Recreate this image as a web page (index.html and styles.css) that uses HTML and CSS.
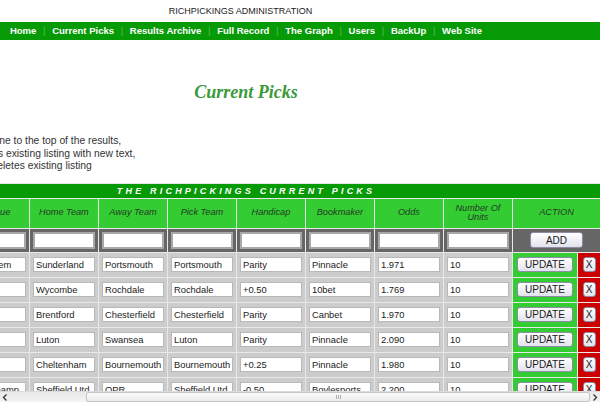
FILE: index.html
```html
<!DOCTYPE html>
<html>
<head>
<meta charset="utf-8">
<title>RichPickings Administration</title>
<link rel="stylesheet" href="styles.css">
</head>
<body>
<div class="viewport">
  <div class="page">
    <div class="site-title">RICHPICKINGS ADMINISTRATION</div>
    <nav class="menu">
      <a href="#">Home</a><span class="sep">|</span>
      <a href="#">Current Picks</a><span class="sep">|</span>
      <a href="#">Results Archive</a><span class="sep">|</span>
      <a href="#">Full Record</a><span class="sep">|</span>
      <a href="#">The Graph</a><span class="sep">|</span>
      <a href="#">Users</a><span class="sep">|</span>
      <a href="#">BackUp</a><span class="sep">|</span>
      <a href="#">Web Site</a>
    </nav>
    <h1 class="page-title">Current Picks</h1>
    <div class="notes">
      <p>ADD - Puts a new line to the top of the results,</p>
      <p>UPDATE - Replaces existing listing with new text,</p>
      <p>X - The 'X' button deletes existing listing</p>
    </div>
    <table class="picks">
      <colgroup>
        <col class="c"><col class="c"><col class="c"><col class="c"><col class="c"><col class="c"><col class="c"><col class="c"><col class="c"><col class="cu"><col class="cx">
      </colgroup>
      <tr class="bar"><th colspan="11">THE RICHPICKINGS CURRENT PICKS</th></tr>
      <tr class="heads">
        <th>Date</th><th>League</th><th>Home Team</th><th>Away Team</th><th>Pick Team</th><th>Handicap</th><th>Bookmaker</th><th>Odds</th><th>Number Of<br>Units</th><th colspan="2">ACTION</th>
      </tr>
      <tr class="addrow">
        <td><input type="text"></td><td><input type="text"></td><td><input type="text"></td><td><input type="text"></td><td><input type="text"></td><td><input type="text"></td><td><input type="text"></td><td><input type="text"></td><td><input type="text"></td>
        <td colspan="2"><button class="btn add">ADD</button></td>
      </tr>
      <tr class="row">
        <td><input value="21/02/09"></td><td><input value="Eng. Prem"></td><td><input value="Sunderland"></td><td><input value="Portsmouth"></td><td><input value="Portsmouth"></td><td><input value="Parity"></td><td><input value="Pinnacle"></td><td><input value="1.971"></td><td><input value="10"></td>
        <td class="upd"><button class="btn">UPDATE</button></td><td class="del"><button class="btn x">X</button></td>
      </tr>
      <tr class="row">
        <td><input value="21/02/09"></td><td><input value="Eng. L2"></td><td><input value="Wycombe"></td><td><input value="Rochdale"></td><td><input value="Rochdale"></td><td><input value="+0.50"></td><td><input value="10bet"></td><td><input value="1.769"></td><td><input value="10"></td>
        <td class="upd"><button class="btn">UPDATE</button></td><td class="del"><button class="btn x">X</button></td>
      </tr>
      <tr class="row">
        <td><input value="21/02/09"></td><td><input value="Eng. L2"></td><td><input value="Brentford"></td><td><input value="Chesterfield"></td><td><input value="Chesterfield"></td><td><input value="Parity"></td><td><input value="Canbet"></td><td><input value="1.970"></td><td><input value="10"></td>
        <td class="upd"><button class="btn">UPDATE</button></td><td class="del"><button class="btn x">X</button></td>
      </tr>
      <tr class="row">
        <td><input value="21/02/09"></td><td><input value="Eng. L1"></td><td><input value="Luton"></td><td><input value="Swansea"></td><td><input value="Luton"></td><td><input value="Parity"></td><td><input value="Pinnacle"></td><td><input value="2.090"></td><td><input value="10"></td>
        <td class="upd"><button class="btn">UPDATE</button></td><td class="del"><button class="btn x">X</button></td>
      </tr>
      <tr class="row">
        <td><input value="21/02/09"></td><td><input value="Eng. L1"></td><td><input value="Cheltenham"></td><td><input value="Bournemouth"></td><td><input value="Bournemouth"></td><td><input value="+0.25"></td><td><input value="Pinnacle"></td><td><input value="1.980"></td><td><input value="10"></td>
        <td class="upd"><button class="btn">UPDATE</button></td><td class="del"><button class="btn x">X</button></td>
      </tr>
      <tr class="row">
        <td><input value="22/02/09"></td><td><input value="Eng. Champ"></td><td><input value="Sheffield Utd"></td><td><input value="QPR"></td><td><input value="Sheffield Utd"></td><td><input value="-0.50"></td><td><input value="Boylesports"></td><td><input value="2.200"></td><td><input value="10"></td>
        <td class="upd"><button class="btn">UPDATE</button></td><td class="del"><button class="btn x">X</button></td>
      </tr>
    </table>
  </div>
</div>
<div class="hscroll">
  <div class="arrow left"><svg width="6" height="7" viewBox="0 0 6 7"><path d="M4.5 0.5 L1.5 3.5 L4.5 6.5" fill="none" stroke="#333" stroke-width="1.3"/></svg></div>
  <div class="track">
    <div class="thumb"><span class="grip"></span></div>
  </div>
  <div class="arrow right"><svg width="6" height="7" viewBox="0 0 6 7"><path d="M1.5 0.5 L4.5 3.5 L1.5 6.5" fill="none" stroke="#333" stroke-width="1.3"/></svg></div>
</div>
</body>
</html>
```

FILE: styles.css
```css
html, body {
  margin: 0;
  padding: 0;
  background: #ffffff;
  overflow: hidden;
}

.viewport {
  width: 600px;
  height: 391px;
  overflow: hidden;
}

.page {
  width: 860px;
  margin-left: -184px;
}

.site-title {
  height: 22px;
  line-height: 22px;
  text-align: center;
  padding-right: 11px;
  font-family: "Liberation Sans", Arial, sans-serif;
  font-size: 9px;
  color: #222222;
}

.menu {
  height: 18px;
  background: #079a07;
  display: flex;
  justify-content: center;
  align-items: center;
  font-family: "Liberation Sans", Arial, sans-serif;
  font-size: 9.5px;
  font-weight: bold;
  line-height: 18px;
}

.menu a {
  color: #ffffff;
  text-decoration: none;
}

.menu .sep {
  color: #4fc14f;
  font-weight: normal;
  margin: 0 6.7px;
}

.page-title {
  margin: 40px 0 0;
  height: 24px;
  line-height: 24px;
  text-align: center;
  font-family: "Liberation Serif", "Times New Roman", serif;
  font-size: 18px;
  font-style: italic;
  font-weight: bold;
  color: #3a9a3a;
}

.notes {
  margin: 31px 0 0 94px;
  font-family: "Liberation Sans", Arial, sans-serif;
  font-size: 10.3px;
  line-height: 12.5px;
  color: #333333;
}

.notes p {
  margin: 0;
}

.picks {
  margin: 10px auto 0;
  width: 710px;
  table-layout: fixed;
  border-collapse: separate;
  border-spacing: 1px;
  background: #e8e8e8;
  font-family: "Liberation Sans", Arial, sans-serif;
}

.picks col.c { width: 68px; }
.picks col.cu { width: 64px; }
.picks col.cx { width: 22px; }

.picks th,
.picks td {
  padding: 0;
  vertical-align: middle;
  text-align: center;
}

.bar th {
  height: 14px;
  background: #079a07;
  color: #ffffff;
  font-size: 9px;
  font-weight: bold;
  font-style: italic;
  letter-spacing: 3.2px;
  line-height: 14px;
}

.heads th {
  height: 29px;
  background: #33cc33;
  color: #253b25;
  font-size: 9.2px;
  font-style: italic;
  font-weight: normal;
  line-height: 9.5px;
}

.addrow td {
  height: 23px;
  background: #666666;
}

.row td {
  height: 24px;
  background: #cccccc;
}

.row td.upd {
  background: #33cc33;
}

.row td.del {
  background: #cc0000;
}

.picks input {
  display: block;
  box-sizing: border-box;
  width: 62px;
  height: 15px;
  margin: 0 auto;
  padding: 0 2px;
  border: 1px solid #b8b8b8;
  background: #ffffff;
  font-family: "Liberation Sans", Arial, sans-serif;
  font-size: 9.4px;
  color: #222222;
  outline: none;
}

.addrow input {
  height: 17px;
  border: 2px solid #a8a8a8;
}

.btn {
  display: block;
  box-sizing: border-box;
  width: 56px;
  height: 15px;
  margin: 0 auto;
  padding: 0;
  border: 1px solid #8c8ca4;
  border-radius: 3px;
  background: linear-gradient(#ffffff, #e2e2ec);
  font-family: "Liberation Sans", Arial, sans-serif;
  font-size: 10px;
  line-height: 13px;
  color: #1a1a1a;
}

.btn.add {
  width: 53px;
  height: 16px;
}

.btn.x {
  width: 13px;
}

.hscroll {
  height: 11px;
  display: flex;
  background: linear-gradient(#e9e9e9, #f4f4f4);
  border-top: 1px solid #dcdcdc;
  box-sizing: border-box;
}

.arrow {
  width: 10px;
  display: flex;
  align-items: center;
  justify-content: center;
}

.track {
  flex: 1;
  display: flex;
  padding: 0 0 0 76px;
}

.thumb {
  flex: 1;
  display: flex;
  justify-content: center;
  align-items: center;
  background: linear-gradient(#fbfbfb, #ececec);
  border: 1px solid #c6c6c6;
  border-radius: 2px;
}

.grip {
  width: 5px;
  height: 4px;
  background: repeating-linear-gradient(90deg, #b0b0b0 0 1px, transparent 1px 2px);
}
```
